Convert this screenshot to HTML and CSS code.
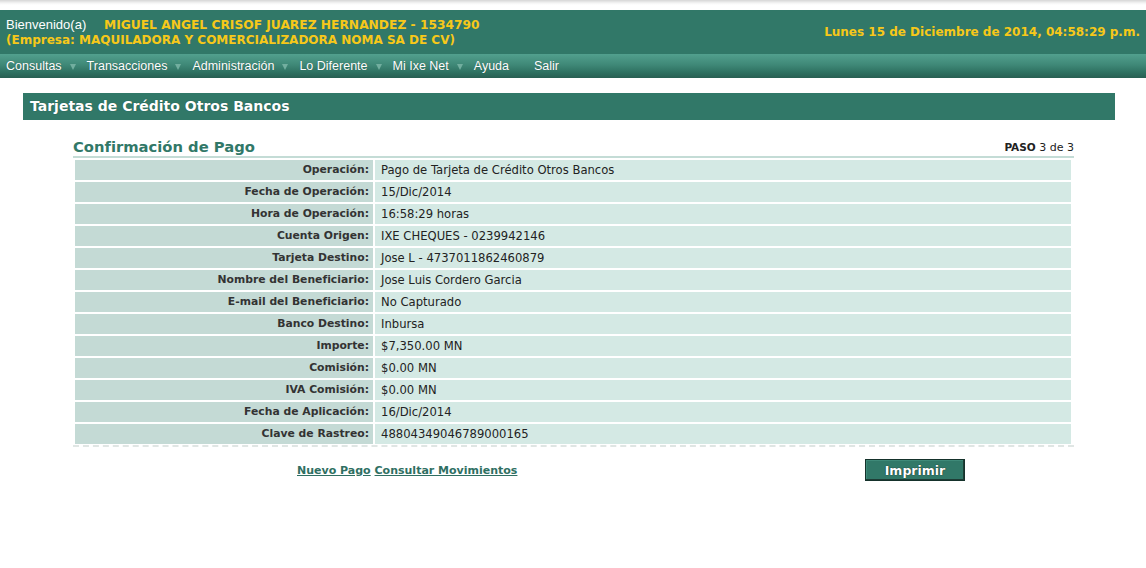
FILE: index.html
```html
<!DOCTYPE html>
<html lang="es">
<head>
<meta charset="utf-8">
<title>Tarjetas de Crédito Otros Bancos</title>
<link rel="stylesheet" href="styles.css">
</head>
<body>
<div class="topstrip"></div>
<header class="header">
  <div class="who">
    <div class="line1"><span class="hello">Bienvenido(a)</span><span class="name">MIGUEL ANGEL CRISOF JUAREZ HERNANDEZ - 1534790</span></div>
    <div class="line2">(Empresa: MAQUILADORA Y COMERCIALIZADORA NOMA SA DE CV)</div>
  </div>
  <div class="date">Lunes 15 de Diciembre de 2014, 04:58:29 p.m.</div>
</header>
<nav class="menu">
  <span class="item">Consultas<i class="arrow"></i></span>
  <span class="item">Transacciones<i class="arrow"></i></span>
  <span class="item">Administración<i class="arrow"></i></span>
  <span class="item">Lo Diferente<i class="arrow"></i></span>
  <span class="item">Mi Ixe Net<i class="arrow"></i></span>
  <span class="item">Ayuda<i class="arrow hidden"></i></span>
  <span class="item">Salir</span>
</nav>
<main class="content">
  <h1 class="titlebar">Tarjetas de Crédito Otros Bancos</h1>
  <section class="panel">
    <div class="panel-head">
      <h2 class="subtitle">Confirmación de Pago</h2>
      <div class="step"><b>PASO</b> 3 de 3</div>
    </div>
    <table class="data">
      <tr><th>Operación:</th><td>Pago de Tarjeta de Crédito Otros Bancos</td></tr>
      <tr><th>Fecha de Operación:</th><td>15/Dic/2014</td></tr>
      <tr><th>Hora de Operación:</th><td>16:58:29 horas</td></tr>
      <tr><th>Cuenta Origen:</th><td>IXE CHEQUES - 0239942146</td></tr>
      <tr><th>Tarjeta Destino:</th><td>Jose L - 4737011862460879</td></tr>
      <tr><th>Nombre del Beneficiario:</th><td>Jose Luis Cordero Garcia</td></tr>
      <tr><th>E-mail del Beneficiario:</th><td>No Capturado</td></tr>
      <tr><th>Banco Destino:</th><td>Inbursa</td></tr>
      <tr><th>Importe:</th><td>$7,350.00 MN</td></tr>
      <tr><th>Comisión:</th><td>$0.00 MN</td></tr>
      <tr><th>IVA Comisión:</th><td>$0.00 MN</td></tr>
      <tr><th>Fecha de Aplicación:</th><td>16/Dic/2014</td></tr>
      <tr><th>Clave de Rastreo:</th><td>48804349046789000165</td></tr>
    </table>
    <div class="actions">
      <div class="links"><a href="#">Nuevo Pago</a> <a href="#">Consultar Movimientos</a></div>
      <button class="btn" type="button">Imprimir</button>
    </div>
  </section>
</main>
</body>
</html>
```

FILE: styles.css
```css
html, body {
  margin: 0;
  padding: 0;
  background: #fff;
}
body {
  font-family: "DejaVu Sans", Verdana, sans-serif;
  color: #222;
}
.topstrip {
  height: 10px;
  background: linear-gradient(#d6d6d6, #f4f4f4 3px, #fff 5px);
}
.header {
  height: 44px;
  background: #317868;
  display: flex;
  justify-content: space-between;
  align-items: flex-start;
  padding: 0 6px;
  box-sizing: border-box;
}
.who {
  padding-top: 5px;
}
.line1, .line2 {
  height: 17px;
  line-height: 17px;
  white-space: nowrap;
}
.hello {
  font-family: "Liberation Sans", Arial, sans-serif;
  font-size: 13px;
  color: #fff;
  display: inline-block;
  width: 98px;
}
.name, .line2, .date {
  font-family: "DejaVu Sans", Verdana, sans-serif;
  font-weight: bold;
  font-size: 12px;
  color: #f7c819;
}
.name {
  font-size: 12.25px;
}
.date {
  padding-top: 14px;
  line-height: 17px;
}
.menu {
  height: 24px;
  background: linear-gradient(#52a08e, #3f8877 45%, #2f7262 75%, #285f52);
  display: flex;
  align-items: center;
  padding-left: 6px;
  font-family: "Liberation Sans", Arial, sans-serif;
  font-size: 12.5px;
  color: #fff;
  text-shadow: 0 0 1px rgba(0,0,0,0.35);
}
.item {
  display: inline-flex;
  align-items: center;
  white-space: nowrap;
}
.arrow {
  display: inline-block;
  width: 0;
  height: 0;
  border-left: 3.5px solid transparent;
  border-right: 3.5px solid transparent;
  border-top: 6px solid #72ae9f;
  margin: 1px 11px 0 8px;
}
.arrow.hidden {
  visibility: hidden;
}
.content {
  padding: 15px 31px 0 23px;
}
.titlebar {
  margin: 0;
  height: 27px;
  line-height: 27px;
  background: #317868;
  color: #fff;
  font-size: 14px;
  font-weight: bold;
  padding-left: 7px;
  text-shadow: 0 0 1px rgba(0,0,0,0.4);
}
.panel {
  width: 1001px;
  margin-left: 50px;
}
.panel-head {
  display: flex;
  justify-content: space-between;
  align-items: flex-end;
  border-bottom: 2px solid #c4dcd6;
  margin-top: 15px;
  height: 21px;
}
.subtitle {
  margin: 0;
  font-size: 14.75px;
  font-weight: bold;
  color: #317868;
  line-height: 19px;
}
.step {
  font-size: 11px;
  color: #222;
  line-height: 17px;
}
.step b {
  font-size: 10.5px;
}
.data {
  width: 1000px;
  border-collapse: separate;
  border-spacing: 2px;
  margin-top: 0;
  margin-left: 0;
  font-size: 11px;
}
.data th, .data td {
  height: 20px;
  line-height: 20px;
  vertical-align: middle;
  white-space: nowrap;
}
.data th {
  width: 294px;
  padding: 0 4px 0 0;
  background: #c4dad5;
  text-align: right;
  font-weight: bold;
  font-size: 10.8px;
  color: #333;
}
.data td {
  padding: 0 0 0 6px;
  background: #d4e9e4;
  text-align: left;
  font-size: 11.6px;
  color: #222;
}
.actions {
  border-top: 2px dashed #e0e6e4;
  margin-top: -1px;
  display: flex;
  align-items: flex-start;
  padding-top: 12px;
}
.links {
  margin-left: 224px;
  padding-top: 5px;
  font-size: 11px;
  font-weight: bold;
}
.links a {
  color: #2f6f62;
  text-decoration: underline;
}
.btn {
  margin-left: auto;
  margin-right: 109px;
  width: 100px;
  height: 22px;
  background: #317868;
  color: #fff;
  font-family: "DejaVu Sans", Verdana, sans-serif;
  font-size: 12.5px;
  font-weight: bold;
  border: 1px solid #15322b;
  box-shadow: inset -1px -1px 0 #1e3d36, inset 1px 1px 0 #3f8a79;
  padding: 0;
  text-shadow: 0 0 1px #000;
}
```
